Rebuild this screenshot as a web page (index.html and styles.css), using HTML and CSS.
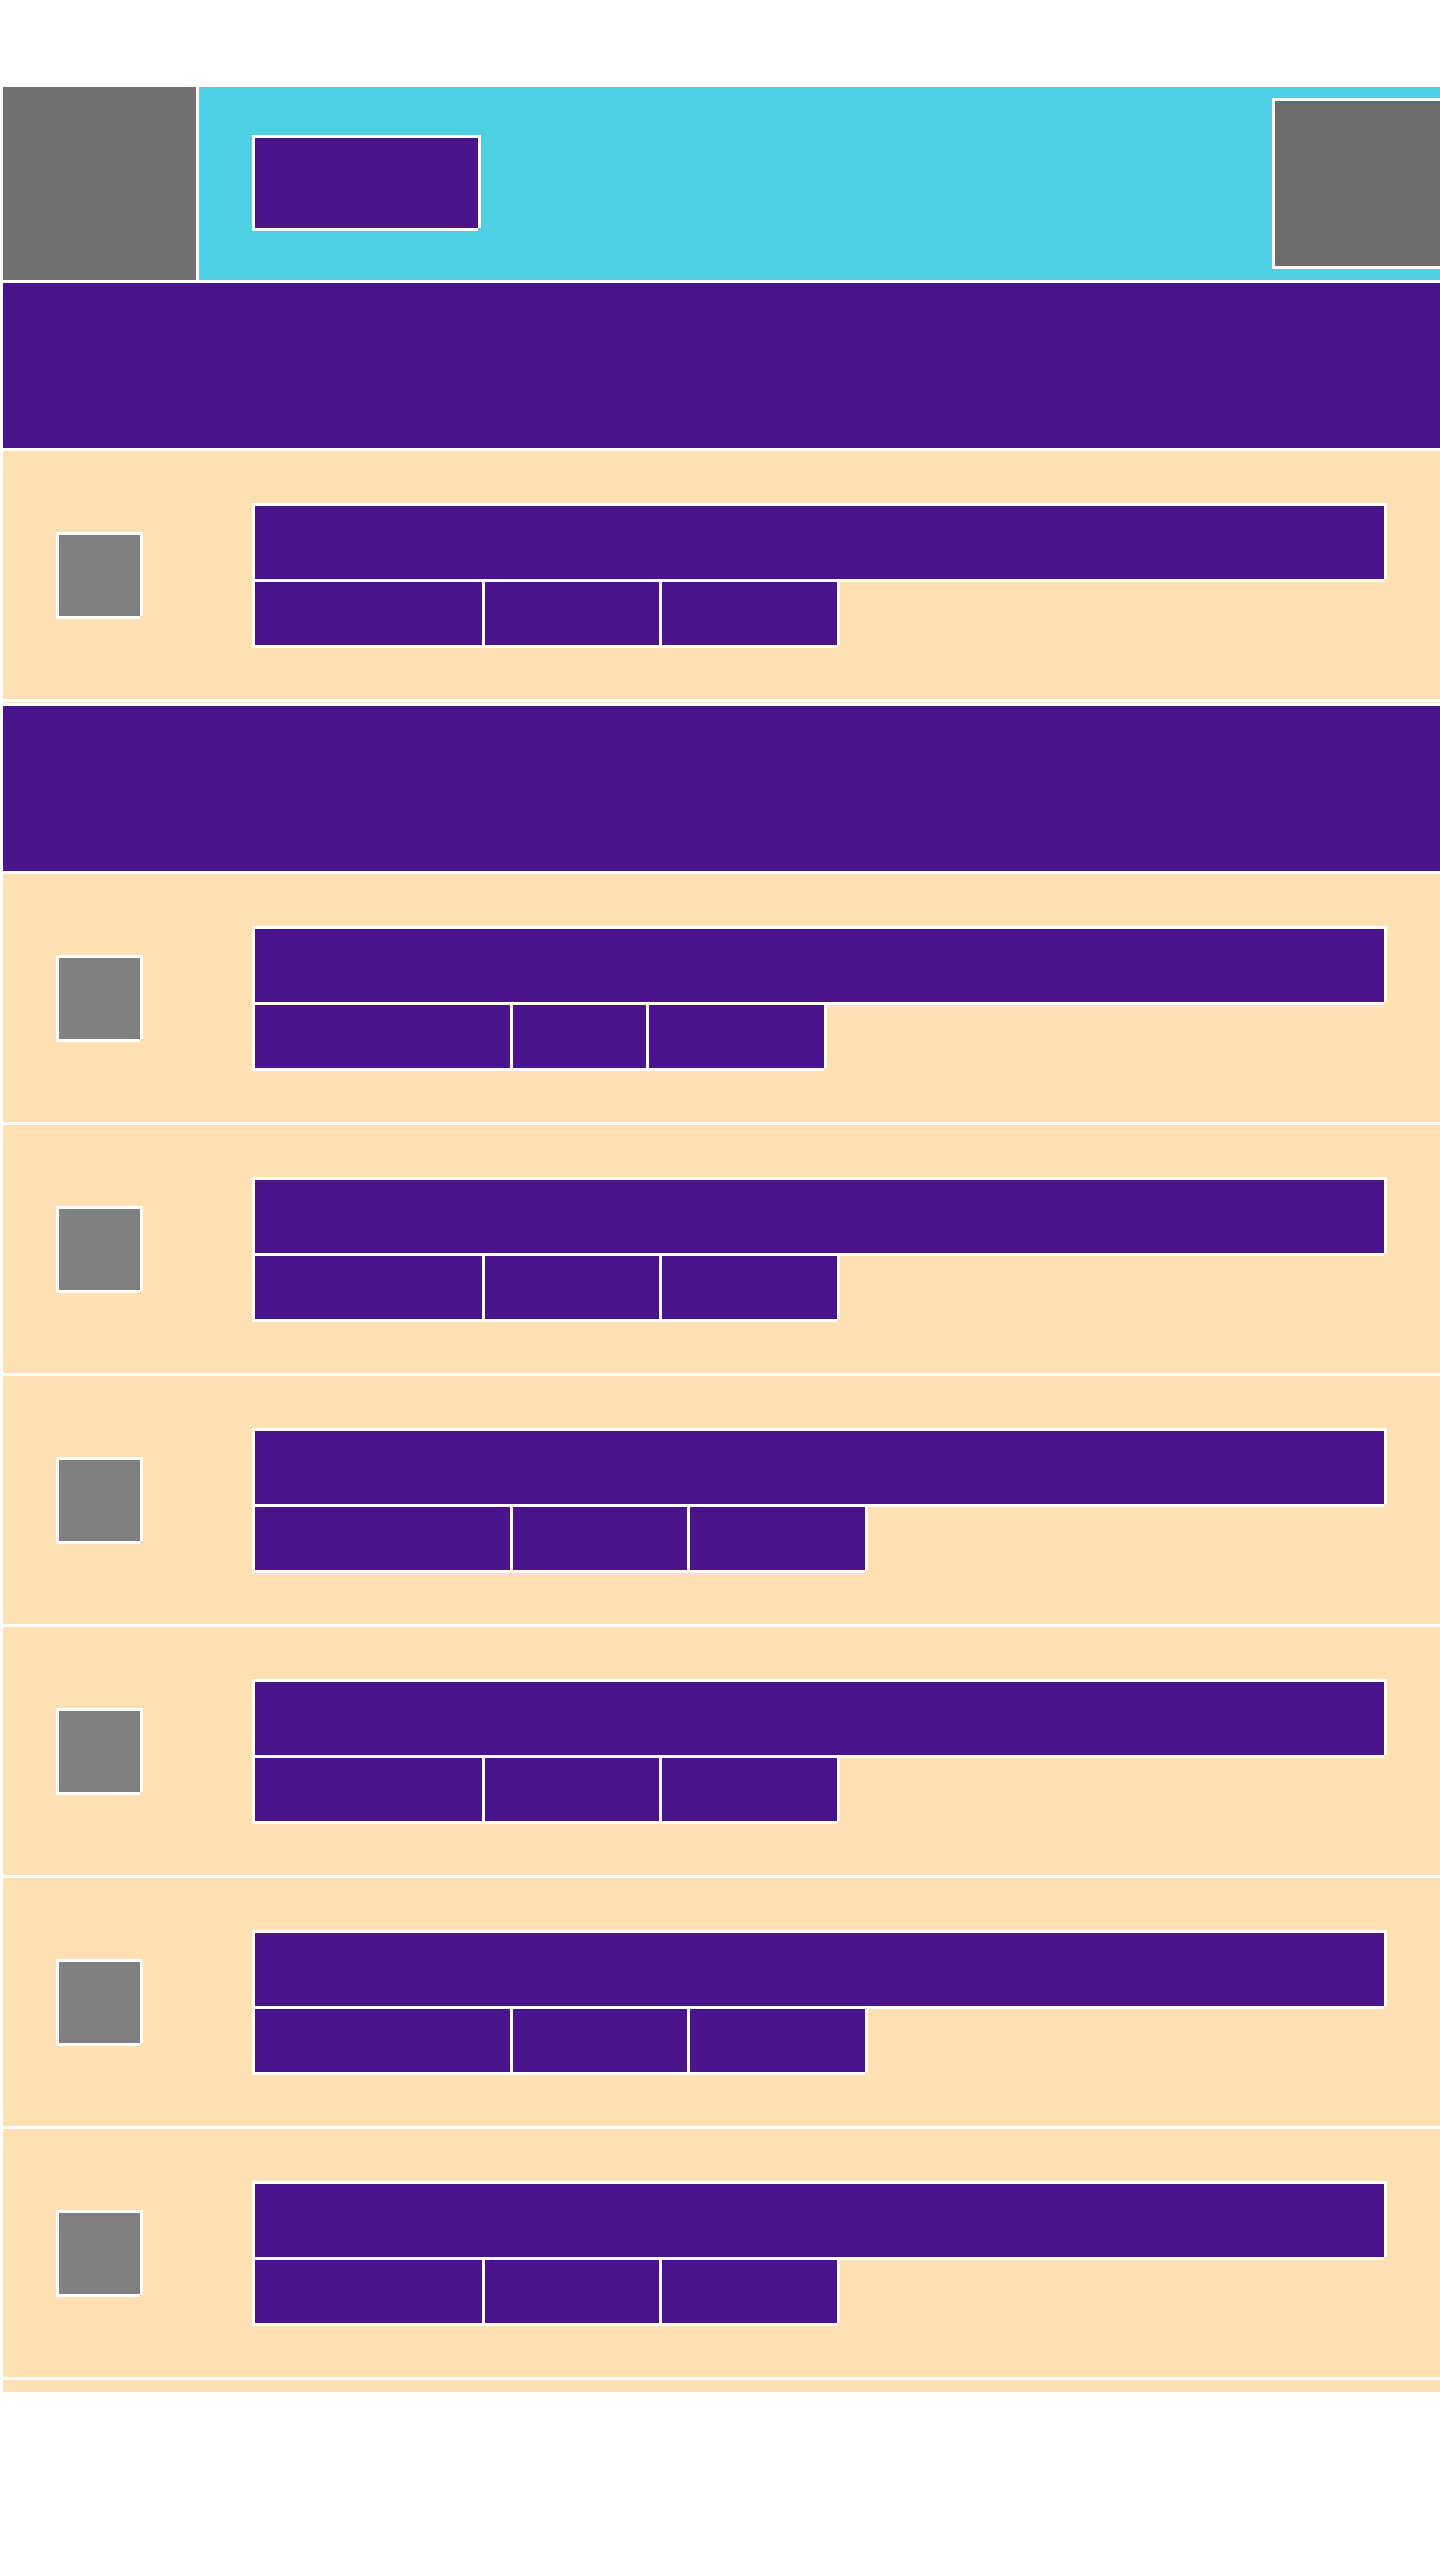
FILE: index.html
```html
<!DOCTYPE html>
<html lang="en">
<head>
    <meta charset="UTF-8">
    <meta name="viewport" content="width=device-width, initial-scale=1.0">
    <title>List</title>
    <link rel="stylesheet" href="styles.css">
</head>
<body>
    <div class="page">
        <header class="topbar">
            <div class="logo box"></div>
            <div class="bar">
                <div class="title box"></div>
                <div class="avatar box"></div>
            </div>
        </header>

        <!-- group 1 -->
        <div class="band"></div>
        <div class="row">
            <div class="thumb box"></div>
            <div class="info">
                <div class="headline box"></div>
                <div class="tags">
                    <div class="tag w227 box"></div>
                    <div class="tag w174 box"></div>
                    <div class="tag w175 box"></div>
                </div>
            </div>
        </div>
        <div class="strip thin"></div>

        <!-- group 2 -->
        <div class="band"></div>
        <div class="row">
            <div class="thumb box"></div>
            <div class="info">
                <div class="headline box"></div>
                <div class="tags">
                    <div class="tag w255 box"></div>
                    <div class="tag w133 box"></div>
                    <div class="tag w175 box"></div>
                </div>
            </div>
        </div>
        <div class="row">
            <div class="thumb box"></div>
            <div class="info">
                <div class="headline box"></div>
                <div class="tags">
                    <div class="tag w227 box"></div>
                    <div class="tag w174 box"></div>
                    <div class="tag w175 box"></div>
                </div>
            </div>
        </div>
        <div class="row">
            <div class="thumb box"></div>
            <div class="info">
                <div class="headline box"></div>
                <div class="tags">
                    <div class="tag w255 box"></div>
                    <div class="tag w174 box"></div>
                    <div class="tag w175 box"></div>
                </div>
            </div>
        </div>
        <div class="row">
            <div class="thumb box"></div>
            <div class="info">
                <div class="headline box"></div>
                <div class="tags">
                    <div class="tag w227 box"></div>
                    <div class="tag w174 box"></div>
                    <div class="tag w175 box"></div>
                </div>
            </div>
        </div>
        <div class="row">
            <div class="thumb box"></div>
            <div class="info">
                <div class="headline box"></div>
                <div class="tags">
                    <div class="tag w255 box"></div>
                    <div class="tag w174 box"></div>
                    <div class="tag w175 box"></div>
                </div>
            </div>
        </div>
        <div class="row">
            <div class="thumb box"></div>
            <div class="info">
                <div class="headline box"></div>
                <div class="tags">
                    <div class="tag w227 box"></div>
                    <div class="tag w174 box"></div>
                    <div class="tag w175 box"></div>
                </div>
            </div>
        </div>
        <div class="strip end"></div>
    </div>
</body>
</html>
```

FILE: styles.css
```css
body {
    margin: 0;
    background-color: #fff;
    font-family: "Liberation Sans", Arial, sans-serif;
}
.page {
    display: flex;
    flex-direction: column;
    gap: 3px;
    padding: 87px 0 0 3px;
}
/* white frame round each block, bottom-right corner left open */
.box {
    box-shadow: -3px -3px 0 #fff, 3px -3px 0 #fff, -3px 3px 0 #fff, 3px 0 0 #fff, 0 3px 0 #fff;
}
.topbar {
    display: flex;
    gap: 3px;
    height: 193px;
}
.logo {
    width: 193px;
    height: 193px;
    background-color: #717171;
    box-shadow: none;
}
.bar {
    flex: 1;
    display: flex;
    align-items: center;
    justify-content: space-between;
    padding-left: 56px;
    background-color: #4dd0e1;
}
.title {
    width: 223px;
    height: 90px;
    margin-bottom: 1px;
    background-color: #4a148c;
}
.avatar {
    width: 165px;
    height: 165px;
    background-color: #6c6c6c;
}
.band {
    height: 165px;
    background-color: #4a148c;
}
.row {
    display: flex;
    align-items: center;
    height: 248px;
    padding-left: 56px;
    background-color: #ffe0b2;
}
.thumb {
    width: 81px;
    height: 81px;
    margin-right: 115px;
    background-color: #808080;
}
.info {
    display: flex;
    flex-direction: column;
    gap: 3px;
    margin-top: 1px;
}
.headline {
    width: 1129px;
    height: 73px;
    background-color: #4a148c;
}
.tags {
    display: flex;
    gap: 3px;
}
.tag {
    height: 63px;
    background-color: #4a148c;
}
.w133 { width: 133px; }
.w174 { width: 174px; }
.w175 { width: 175px; }
.w227 { width: 227px; }
.w255 { width: 255px; }
.strip {
    background-color: #ffe0b2;
}
.strip.thin {
    height: 1px;
}
.strip.end {
    height: 12px;
}
```
